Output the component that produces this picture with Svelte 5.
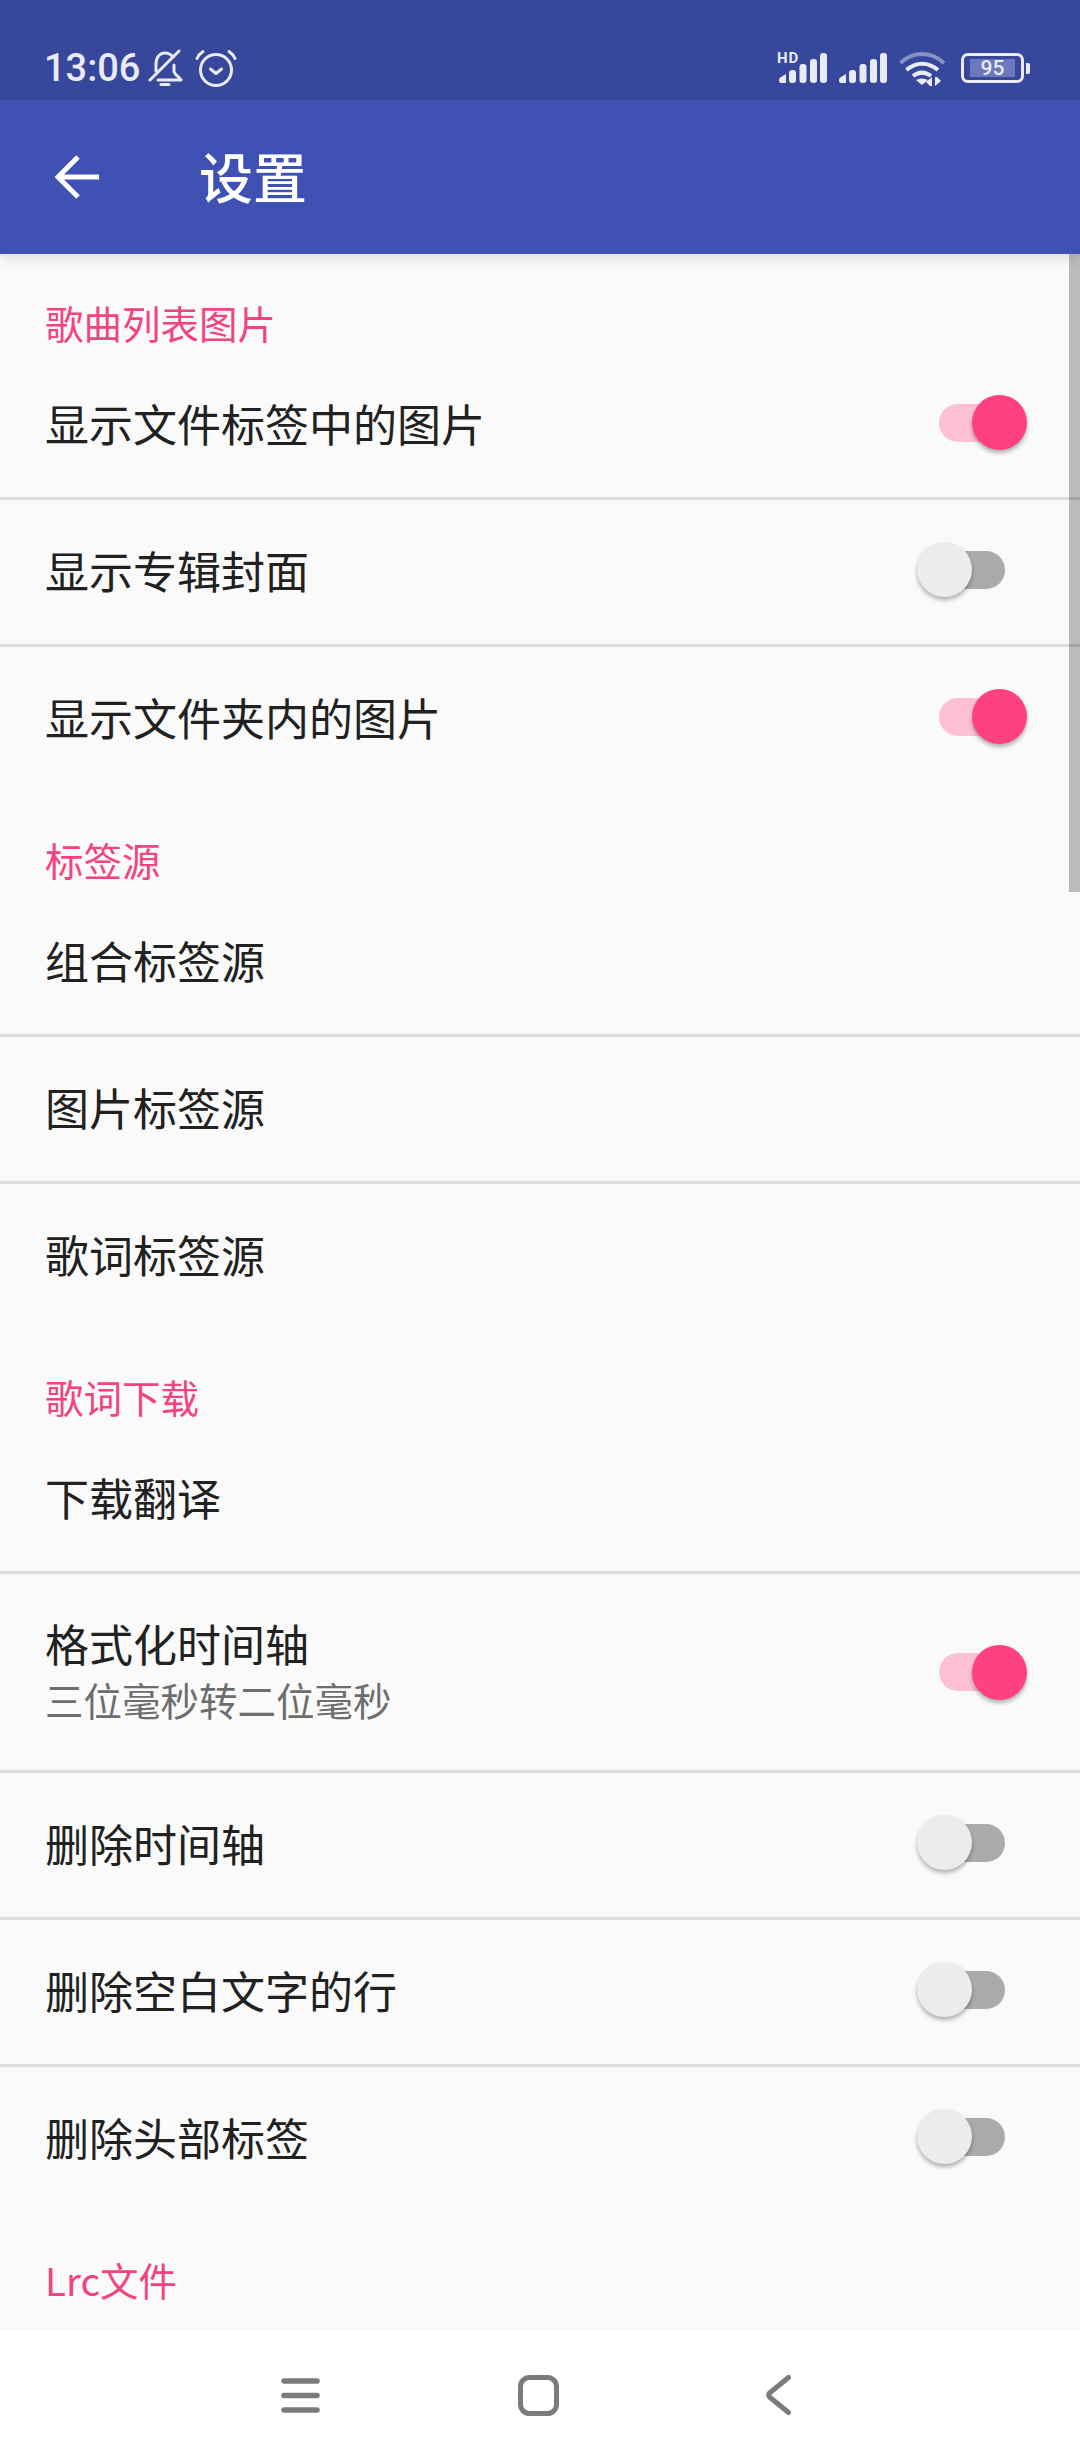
<script>
	const sections = [
		{
			title: '歌曲列表图片',
			rows: [
				{ label: '显示文件标签中的图片', on: true },
				{ label: '显示专辑封面', on: false },
				{ label: '显示文件夹内的图片', on: true }
			]
		},
		{
			title: '标签源',
			rows: [{ label: '组合标签源' }, { label: '图片标签源' }, { label: '歌词标签源' }]
		},
		{
			title: '歌词下载',
			rows: [
				{ label: '下载翻译' },
				{ label: '格式化时间轴', sub: '三位毫秒转二位毫秒', on: true },
				{ label: '删除时间轴', on: false },
				{ label: '删除空白文字的行', on: false },
				{ label: '删除头部标签', on: false }
			]
		},
		{ title: 'Lrc文件', rows: [] }
	];
</script>

<div class="page">
	<header class="status">
		<div class="status-left">
			<span class="time">13:06</span>
			<svg class="bell" width="36" height="38" viewBox="0 0 36 38" fill="none" stroke="currentColor" stroke-width="3" stroke-linecap="round" stroke-linejoin="round">
				<path d="M9 22V15C9 8 13 4 18 4C21 4 24 5.500 26 8" />
				<path d="M27 16V22C27 25 31 27 34 31H11" />
				<path d="M3 31L32 2" />
				<path d="M14 35.500H22" stroke-width="3" />
			</svg>
			<svg class="alarm" width="42" height="38" viewBox="0 0 42 38" fill="none" stroke="currentColor" stroke-linecap="round" stroke-linejoin="round">
				<circle cx="21" cy="21" r="15.500" stroke-width="3" />
				<path d="M15.500 20L21 24.500L26.500 20" stroke-width="3" />
				<path d="M2 9.500C3 7 5 4.500 8 2.500M40 9.500C39 7 37 4.500 34 2.500" stroke-width="3" />
			</svg>
		</div>
		<div class="status-right">
			<div class="signal-hd">
				<span class="hd">HD</span>
				<svg width="48" height="30" viewBox="0 0 48 30" fill="currentColor">
					<path d="M0 27Q0 25 2 24L7 21V30H2Q0 30 0 28Z" />
					<rect x="10" y="17" width="7" height="13" rx="3" />
					<rect x="20.500" y="11" width="7" height="19" rx="3" />
					<rect x="31" y="6" width="7" height="24" rx="3" />
					<rect x="41" y="0" width="7" height="30" rx="3" />
				</svg>
			</div>
			<svg width="48" height="30" viewBox="0 0 48 30" fill="currentColor">
				<path d="M0 27Q0 25 2 24L7 21V30H2Q0 30 0 28Z" />
				<rect x="10" y="17" width="7" height="13" rx="3" />
				<rect x="20.500" y="11" width="7" height="19" rx="3" />
				<rect x="31" y="6" width="7" height="24" rx="3" />
				<rect x="41" y="0" width="7" height="30" rx="3" />
			</svg>
			<svg class="wifi" width="48" height="34" viewBox="0 0 48 34" fill="none" stroke="currentColor" stroke-width="4">
				<path d="M1.500 11C14 -1 32 -1 45 11" opacity="0.45" />
				<path d="M7.500 18C17 9.500 29 9.500 39 18" />
				<path d="M14 24C20 19.500 26 19.500 32 24" />
				<path d="M23 33L17 28C21 26 25 26 29 28Z" fill="currentColor" stroke="none" />
				<path d="M33 25V34H31L27 30ZM36 34V25H38L42 29Z" fill="currentColor" stroke="none" />
			</svg>
			<div class="battery">
				<div class="battery-body">
					<span class="level">95</span>
				</div>
				<span class="nub"></span>
			</div>
		</div>
	</header>

	<div class="toolbar">
		<svg width="44" height="44" viewBox="0 0 44 44" fill="none" stroke="#fff" stroke-width="5">
			<path d="M44 22H4M23 2L3 22L23 42" />
		</svg>
		<h1>设置</h1>
	</div>

	<main class="content">
		{#each sections as section}
			<section class="group">
				<h2>{section.title}</h2>
				{#each section.rows as row, i}
					<div class="row" class:tall={row.sub} class:last={i === section.rows.length - 1}>
						<div class="text">
							<span class="label">{row.label}</span>
							{#if row.sub}
								<span class="sub">{row.sub}</span>
							{/if}
						</div>
						{#if row.on !== undefined}
							<div class="switch" class:on={row.on}>
								<span class="track"></span>
								<span class="thumb"></span>
							</div>
						{/if}
					</div>
				{/each}
			</section>
		{/each}
		<div class="scrollbar"></div>
	</main>

	<nav class="navbar">
		<svg width="39" height="35" viewBox="0 0 39 35" fill="none" stroke="#7b7b7b" stroke-width="5.500" stroke-linecap="round">
			<path d="M3 3H36M3 17.500H36M3 32H36" />
		</svg>
		<svg width="41" height="41" viewBox="0 0 41 41" fill="none" stroke="#7b7b7b" stroke-width="5">
			<rect x="2.500" y="2.500" width="36" height="36" rx="9" />
		</svg>
		<svg class="back" width="25" height="40" viewBox="0 0 25 40" fill="none" stroke="#7b7b7b" stroke-width="5" stroke-linecap="round" stroke-linejoin="round">
			<path d="M22.500 2.500L3.500 18Q2 20 3.500 22L22.500 37.500" />
		</svg>
	</nav>
</div>

<style>
	:global(body) {
		margin: 0;
		background: #fafafa;
	}

	.page {
		display: flex;
		flex-direction: column;
		height: 2460px;
		font-family: 'Noto Sans CJK SC', 'Noto Sans', sans-serif;
		overflow: hidden;
	}

	.status {
		display: flex;
		justify-content: space-between;
		align-items: center;
		flex-shrink: 0;
		box-sizing: border-box;
		height: 100px;
		padding: 36px 50px 0 44px;
		background: #37479c;
		color: #e9ebf7;
	}

	.status-left,
	.status-right {
		display: flex;
		align-items: center;
	}

	.time {
		font-family: Roboto, sans-serif;
		font-size: 38px;
		line-height: 38px;
		font-weight: 500;
		width: 103px;
	}

	.alarm {
		margin-left: 12px;
	}

	.status-right {
		gap: 12px;
	}

	.signal-hd {
		position: relative;
		display: flex;
	}

	.hd {
		position: absolute;
		left: -2px;
		top: -2px;
		font-family: Roboto, sans-serif;
		font-size: 15px;
		line-height: 14px;
		font-weight: 700;
		letter-spacing: 1px;
	}

	.wifi {
		margin-top: 2px;
	}

	.battery {
		display: flex;
		align-items: center;
		gap: 2px;
		margin-left: 2px;
	}

	.battery-body {
		display: flex;
		align-items: center;
		justify-content: center;
		box-sizing: border-box;
		width: 63px;
		height: 30px;
		border: 3px solid currentColor;
		border-radius: 7px;
		padding: 3px;
	}

	.level {
		flex: 1;
		background: #6b78bd;
		text-align: center;
		font-family: Roboto, sans-serif;
		font-size: 21px;
		line-height: 18px;
		font-weight: 500;
		margin-right: 3px;
		margin-left: 3px;
	}

	.nub {
		width: 4px;
		height: 11px;
		background: currentColor;
		border-radius: 0 2px 2px 0;
	}

	.toolbar {
		position: relative;
		z-index: 1;
		display: flex;
		align-items: center;
		flex-shrink: 0;
		height: 154px;
		padding-left: 55px;
		background: #3f51b3;
		box-shadow: 0 4px 12px rgba(0, 0, 0, 0.12);
	}

	h1 {
		margin: 0 0 3px 100px;
		font-size: 54px;
		line-height: 64px;
		font-weight: 500;
		color: #fff;
	}

	.content {
		position: relative;
		flex: 1;
		overflow: hidden;
		box-sizing: border-box;
		padding-top: 3px;
		background: #fafafa;
	}

	.scrollbar {
		position: absolute;
		top: 0;
		right: 0;
		width: 11px;
		height: 638px;
		background: rgba(0, 0, 0, 0.25);
	}

	h2 {
		display: flex;
		align-items: center;
		box-sizing: border-box;
		height: 96px;
		margin: 0;
		padding: 40px 45px 6px;
		font-size: 38.500px;
		line-height: 50px;
		font-weight: 400;
		color: #f4447f;
	}

	.row {
		display: flex;
		align-items: center;
		justify-content: space-between;
		box-sizing: border-box;
		height: 147px;
		padding: 0 53px 5px 45px;
		border-bottom: 3px solid #dddddd;
	}

	.row.tall {
		height: 199px;
		padding-bottom: 0;
	}

	.row.tall .text {
		margin-bottom: 7px;
	}

	.row.last {
		border-bottom-color: transparent;
	}

	.text {
		display: flex;
		flex-direction: column;
	}

	.label {
		font-size: 44px;
		line-height: 56px;
		color: #212121;
	}

	.sub {
		margin-top: 5px;
		font-size: 38.500px;
		line-height: 46px;
		color: #6d6d6d;
	}

	.switch {
		position: relative;
		width: 110px;
		height: 55px;
		flex-shrink: 0;
	}

	.track {
		position: absolute;
		top: 8.500px;
		left: 10px;
		width: 78px;
		height: 38px;
		border-radius: 19px;
		background: #ababab;
	}

	.thumb {
		position: absolute;
		top: 0;
		left: 0;
		width: 55px;
		height: 55px;
		border-radius: 50%;
		background: #ececec;
		box-shadow: 0 3px 4px rgba(0, 0, 0, 0.3);
	}

	.switch.on .track {
		left: 22px;
		background: #fdc0d6;
	}

	.switch.on .thumb {
		left: 55px;
		background: #ff4081;
	}

	.navbar {
		display: flex;
		align-items: center;
		flex-shrink: 0;
		box-sizing: border-box;
		height: 130px;
		padding-left: 281px;
		gap: 198px;
		background: #fff;
	}

	.back {
		margin-left: 9px;
	}
</style>
